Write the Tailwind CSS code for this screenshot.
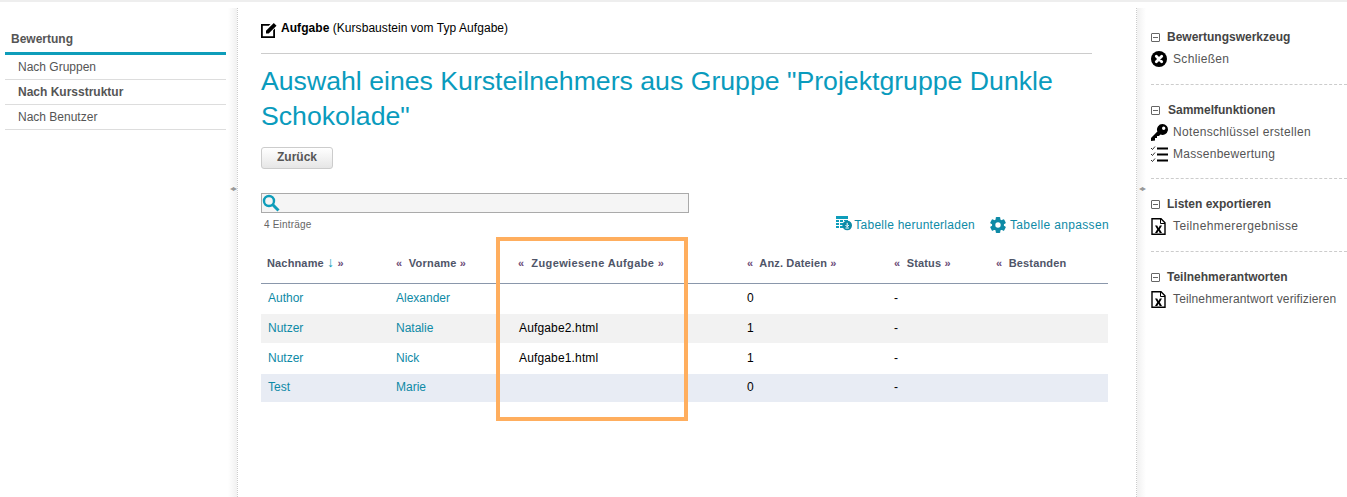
<!DOCTYPE html>
<html lang="de">
<head>
  <meta charset="UTF-8" />
  <title>Bewertung</title>
  <script src="https://cdn.jsdelivr.net/npm/@tailwindcss/browser@4"></script>
</head>
<body class="bg-white font-['Liberation_Sans',Arial,sans-serif] text-[12px] text-[#555] h-[497px] w-[1347px] overflow-hidden">
  <div class="h-[2px] bg-[#eeeeee]"></div>
  <div class="flex h-[495px] relative">

    <!-- Left menu -->
    <aside class="w-[238px] shrink-0 pl-[5px] pr-[11px] pt-[20px] relative border-r border-dotted border-[#cccccc] mt-[6px] -mb-[6px]">
      <div class="absolute right-0 top-0 bottom-0 w-[9px] bg-gradient-to-r from-white to-[#f1f1f1]"></div>
      <span class="absolute right-0 top-[177px] w-[9px] text-center text-[8px] leading-[8px] text-[#999] tracking-[-1px]">◂▸</span>
      <div class="h-[24px] pl-[6px] text-[12px] font-bold text-[#555] border-b-[3px] border-[#0e9dba] box-content leading-[22px]">Bewertung</div>
      <ul class="text-[12px] text-[#555]">
        <li class="h-[25px] pl-[13px] leading-[24px] border-b border-[#dddddd]">Nach Gruppen</li>
        <li class="h-[25px] pl-[13px] leading-[24px] border-b border-[#dddddd] font-bold">Nach Kursstruktur</li>
        <li class="h-[25px] pl-[13px] leading-[24px] border-b border-[#dddddd]">Nach Benutzer</li>
      </ul>
    </aside>

    <!-- Main -->
    <main class="w-[898px] shrink-0 pl-[23px] pr-[28px] pt-[18px] relative">
      <div class="flex items-start h-[34px] border-b border-[#cccccc] mr-[16px] text-black">
        <svg class="w-[16px] h-[16px] mt-[2px] mr-[4px] shrink-0" viewBox="0 0 16 16">
          <path d="M0 2h9.500L7.800 3.800H1.800v10.400h10.400V8.200L14 6.500V16H0z" fill="#000"/>
          <path d="M5 8.800 12.800 1l2.700 2.700L7.700 11.500H5z" fill="#000"/>
        </svg>
        <span class="leading-[16px] tracking-[0.05px]"><b>Aufgabe</b> (Kursbaustein vom Typ Aufgabe)</span>
      </div>
      <h1 class="mt-[10px] text-[26.66px] leading-[35px] text-[#0a9bbd] font-normal">Auswahl eines Kursteilnehmers aus Gruppe "Projektgruppe Dunkle Schokolade"</h1>
      <button class="mt-[13px] block w-[72px] h-[22px] pb-[2px] rounded-[3px] border border-[#cccccc] bg-gradient-to-b from-white to-[#e6e6e6] font-bold text-[12px] text-[#555]">Zurück</button>

      <div class="mt-[24px] w-[428px] h-[20px] border border-[#aaaaaa] bg-[#f5f5f5] flex items-center">
        <svg class="w-[18px] h-[18px] shrink-0" viewBox="0 0 18 18" fill="none" stroke="#0e9dba">
          <circle cx="7" cy="7" r="5" stroke-width="2.400"/>
          <path d="M10.800 10.800 16.500 16.500" stroke-width="3"/>
        </svg>
      </div>
      <div class="flex justify-between h-[20px] w-[848px]">
        <span class="pl-[3px] pt-[5px] text-[10px] leading-[14px] text-[#666] tracking-[0.2px]">4 Einträge</span>
        <div class="flex items-start text-[#0e8aa6] pt-[4px] leading-[16px]">
          <svg class="w-[16px] h-[15px] mr-[2px] -mt-px" viewBox="0 0 16 15">
            <path d="M0 0h12v3H0zM0 4h3v2H0zM4 4h3v2H4zM8 4h4v1H8zM0 7h3v2H0zM4 7h3v2H4zM0 10h3v2H0zM4 10h3v2H4z" fill="#0e9dba"/>
            <circle cx="11.200" cy="9.500" r="4.800" fill="#0e8aa6"/>
            <path d="M11.200 6.800v3.500M9.500 9l1.700 1.800L12.900 9M9.500 12h3.400" stroke="#fff" fill="none"/>
          </svg>
          <span class="tracking-[0.25px]">Tabelle herunterladen</span>
          <svg class="w-[16px] h-[16px] ml-[15px] mr-[4px]" viewBox="0 0 16 16">
            <g fill="#0e8aa6">
              <circle cx="8" cy="8" r="6"/>
              <rect x="5.700" y="0" width="4.600" height="16" rx="1"/>
              <rect x="5.700" y="0" width="4.600" height="16" rx="1" transform="rotate(60 8 8)"/>
              <rect x="5.700" y="0" width="4.600" height="16" rx="1" transform="rotate(120 8 8)"/>
            </g>
            <circle cx="8" cy="8" r="2.700" fill="#fff"/>
          </svg>
          <span class="tracking-[0.35px]">Tabelle anpassen</span>
        </div>
      </div>

      <table class="w-[847px] mt-[10px] table-fixed border-collapse text-[12px]">
        <thead>
          <tr class="h-[40px] border-b border-[#8a97ab] text-[11px] text-[#4f5568] text-left">
            <th class="w-[129px] pl-[6px] font-bold tracking-[0.15px]">Nachname <span class="font-normal text-[14px] leading-[10px] text-[#0e9dba]">↓</span> <span class="text-[#6b4a78]">»</span></th>
            <th class="w-[117px] pl-[6px] font-bold tracking-[0.2px]"><span class="text-[#6b4a78]">«</span>&nbsp; Vorname <span class="text-[#6b4a78]">»</span></th>
            <th class="w-[234px] pl-[11px] font-bold tracking-[0.38px]"><span class="text-[#6b4a78]">«</span>&nbsp; Zugewiesene Aufgabe <span class="text-[#6b4a78]">»</span></th>
            <th class="w-[147px] pl-[6px] font-bold tracking-[0.15px]"><span class="text-[#6b4a78]">«</span>&nbsp; Anz. Dateien <span class="text-[#6b4a78]">»</span></th>
            <th class="w-[102px] pl-[6px] font-bold tracking-[0.15px]"><span class="text-[#6b4a78]">«</span>&nbsp; Status <span class="text-[#6b4a78]">»</span></th>
            <th class="pl-[6px] font-bold tracking-[0.15px]"><span class="text-[#6b4a78]">«</span>&nbsp; Bestanden</th>
          </tr>
        </thead>
        <tbody class="text-black">
          <tr class="h-[31px] [&>td]:pb-px">
            <td class="pl-[7px] text-[#0e8aa6]">Author</td>
            <td class="pl-[6px] text-[#0e8aa6]">Alexander</td>
            <td class="pl-[12px]"></td>
            <td class="pl-[6px]">0</td>
            <td class="pl-[6px]">-</td>
            <td></td>
          </tr>
          <tr class="h-[29px] bg-[#f2f2f2] [&>td]:pb-[2px]">
            <td class="pl-[7px] text-[#0e8aa6]">Nutzer</td>
            <td class="pl-[6px] text-[#0e8aa6]">Natalie</td>
            <td class="pl-[12px] tracking-[0.15px]">Aufgabe2.html</td>
            <td class="pl-[6px]">1</td>
            <td class="pl-[6px]">-</td>
            <td></td>
          </tr>
          <tr class="h-[31px] [&>td]:pb-px">
            <td class="pl-[7px] text-[#0e8aa6]">Nutzer</td>
            <td class="pl-[6px] text-[#0e8aa6]">Nick</td>
            <td class="pl-[12px] tracking-[0.15px]">Aufgabe1.html</td>
            <td class="pl-[6px]">1</td>
            <td class="pl-[6px]">-</td>
            <td></td>
          </tr>
          <tr class="h-[28px] bg-[#e8ecf4] [&>td]:pb-[3px]">
            <td class="pl-[7px] text-[#0e8aa6]">Test</td>
            <td class="pl-[6px] text-[#0e8aa6]">Marie</td>
            <td class="pl-[12px]"></td>
            <td class="pl-[6px]">0</td>
            <td class="pl-[6px]">-</td>
            <td></td>
          </tr>
        </tbody>
      </table>
      <!-- highlight annotation on top of the screenshot -->
      <div class="absolute left-[258px] top-[235px] w-[192px] h-[184px] border-[4px] border-[#ffae5e]"></div>
    </main>

    <!-- Right tools -->
    <aside class="flex-1 relative border-l border-dotted border-[#cccccc] mt-[6px] -mb-[6px] pl-[14px] text-[12px] text-[#555]">
      <div class="absolute left-0 top-0 bottom-0 w-[9px] bg-gradient-to-l from-white to-[#f1f1f1]"></div>
      <span class="absolute left-0 top-[177px] w-[9px] text-center text-[8px] leading-[8px] text-[#999] tracking-[-1px]">◂▸</span>

      <section class="h-[77px] border-b border-dashed border-[#cccccc] pt-[21px]">
        <h3 class="flex items-center font-bold leading-[16px] text-[#444]">
          <span class="w-[9px] h-[9px] border border-[#666] rounded-[1px] flex items-center justify-center mr-[7px]"><span class="w-[5px] h-px bg-[#666]"></span></span>Bewertungswerkzeug
        </h3>
        <div class="flex items-center mt-[6px] h-[16px]">
          <svg class="w-[16px] h-[16px] mr-[6px]" viewBox="0 0 16 16"><circle cx="8" cy="8" r="8" fill="#000"/><path d="M5.300 5.300l5.400 5.400M10.700 5.300l-5.400 5.400" stroke="#fff" stroke-width="2.800" stroke-linecap="round"/></svg>
          <span class="tracking-[0.33px]">Schließen</span>
        </div>
      </section>

      <section class="h-[94px] border-b border-dashed border-[#cccccc] pt-[17px]">
        <h3 class="flex items-center font-bold leading-[16px] text-[#444]">
          <span class="w-[9px] h-[9px] border border-[#666] rounded-[1px] flex items-center justify-center mr-[8px]"><span class="w-[5px] h-px bg-[#666]"></span></span>Sammelfunktionen
        </h3>
        <div class="flex items-center mt-[6px] h-[16px]">
          <svg class="w-[17px] h-[17px] mr-[5px]" viewBox="0 0 17 17"><path fill="#000" fill-rule="evenodd" d="M11.500 0a5.500 5.500 0 1 1-2.100 10.600L8 12H6v2H4v2.500l-4 .5v-3l6.400-6.400A5.500 5.500 0 0 1 11.500 0zm1.200 2.500a1.700 1.700 0 1 0 0 3.400 1.700 1.700 0 0 0 0-3.400z"/></svg>
          <span class="tracking-[0.33px]">Notenschlüssel erstellen</span>
        </div>
        <div class="flex items-center mt-[6px] h-[16px]">
          <svg class="w-[17px] h-[17px] mr-[5px]" viewBox="0 0 17 17" fill="none" stroke="#000"><path d="M0 2l1.500 1.500L4 .5M0 8l1.500 1.500L4 6.500M0 14l1.500 1.500L4 12.500" stroke-width=".8"/><path d="M6 2.500h11M6 8.500h11M6 14.500h11" stroke-width="2"/></svg>
          <span class="tracking-[0.27px]">Massenbewertung</span>
        </div>
      </section>

      <section class="h-[73px] border-b border-dashed border-[#cccccc] pt-[17px]">
        <h3 class="flex items-center font-bold leading-[16px] text-[#444]">
          <span class="w-[9px] h-[9px] border border-[#666] rounded-[1px] flex items-center justify-center mr-[7px]"><span class="w-[5px] h-px bg-[#666]"></span></span>Listen exportieren
        </h3>
        <div class="flex items-center mt-[6px] h-[16px]">
          <svg class="w-[15px] h-[17px] mr-[7px]" viewBox="0 0 15 17"><path d="M1 .7h9l4 4v11.600H1z" fill="#fff" stroke="#000" stroke-width="1.400"/><path d="M9.500 1v4.500H14" fill="none" stroke="#000"/><path d="M4 7.500h2.200L7.500 10l1.300-2.500H11L8.800 11.300 11 15H8.700L7.500 12.700 6.300 15H4l2.200-3.700z" fill="#000"/></svg>
          <span class="tracking-[0.4px]">Teilnehmerergebnisse</span>
        </div>
      </section>

      <section class="pt-[17px]">
        <h3 class="flex items-center font-bold leading-[16px] text-[#444]">
          <span class="w-[9px] h-[9px] border border-[#666] rounded-[1px] flex items-center justify-center mr-[7px]"><span class="w-[5px] h-px bg-[#666]"></span></span>Teilnehmerantworten
        </h3>
        <div class="flex items-center mt-[6px] h-[16px]">
          <svg class="w-[15px] h-[17px] mr-[7px]" viewBox="0 0 15 17"><path d="M1 .7h9l4 4v11.600H1z" fill="#fff" stroke="#000" stroke-width="1.400"/><path d="M9.500 1v4.500H14" fill="none" stroke="#000"/><path d="M4 7.500h2.200L7.500 10l1.300-2.500H11L8.800 11.300 11 15H8.700L7.500 12.700 6.300 15H4l2.200-3.700z" fill="#000"/></svg>
          <span class="tracking-[0.13px]">Teilnehmerantwort verifizieren</span>
        </div>
      </section>
    </aside>
  </div>
</body>
</html>
